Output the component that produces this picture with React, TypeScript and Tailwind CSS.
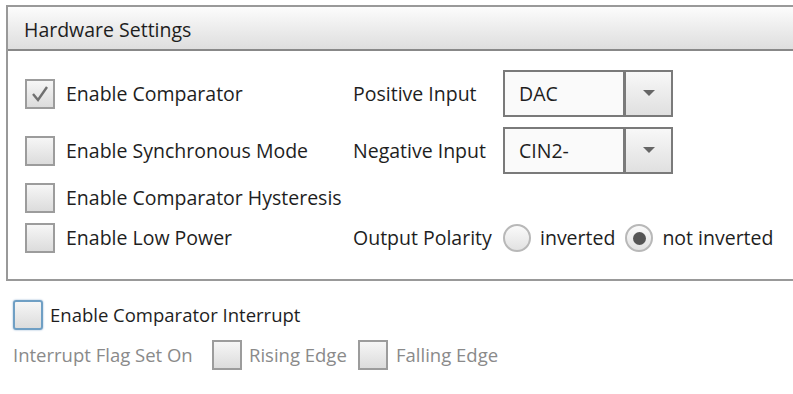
function CheckBox({ checked = false, focused = false }: { checked?: boolean; focused?: boolean }) {
  return (
    <div
      className={
        'flex h-[30px] w-[30px] shrink-0 items-center justify-center border-2 bg-gradient-to-b from-[#f6f6f6] to-[#dcdcdc] ' +
        (focused ? 'border-[#6f9fc4] rounded-[3px] shadow-[0_0_2px_#8ac]' : 'border-[#9c9c9c]')
      }
    >
      {checked && (
        <svg width="20" height="18" viewBox="0 0 20 18">
          <path d="M3 9 L8 15 L17 2" fill="none" stroke="#707070" strokeWidth="2.4" />
        </svg>
      )}
    </div>
  );
}

function Radio({ selected = false }: { selected?: boolean }) {
  return (
    <div className="flex h-[28px] w-[28px] shrink-0 items-center justify-center rounded-full border-2 border-[#b8b8b8] bg-gradient-to-b from-[#fafafa] to-[#e2e2e2]">
      {selected && <div className="h-[13px] w-[13px] rounded-full bg-[#555]" />}
    </div>
  );
}

function Dropdown({ value }: { value: string }) {
  return (
    <div className="flex h-[47px] w-[170px] border-2 border-[#7a7a7a] bg-[#fafafa]">
      <div className="flex flex-1 items-center pl-[14px]">{value}</div>
      <div className="flex w-[48px] items-center justify-center border-l-[3px] border-[#7a7a7a] bg-gradient-to-b from-[#f8f8f8] to-[#e0e0e0]">
        <svg width="12" height="7" viewBox="0 0 12 7">
          <path d="M0 0 L12 0 L6 6 Z" fill="#666" />
        </svg>
      </div>
    </div>
  );
}

export default function App() {
  return (
    <div
      className="h-[394px] w-[793px] overflow-hidden bg-white text-[#1e1e1e]"
      style={{ fontFamily: '"Open Sans", "Noto Sans", sans-serif' }}
    >
      {/* Hardware settings panel */}
      <div className="ml-[6px] mt-[5px] w-[800px] border-y-2 border-l-2 border-[#999] text-[19.5px]">
        <div className="flex h-[44px] items-center border-b-2 border-[#888] bg-gradient-to-b from-[#fcfcfc] to-[#dedede] pl-[16px] pt-[3px]">
          Hardware Settings
        </div>
        <div className="flex flex-col pb-[26px] pl-[17px] pt-[19px]">
          <div className="flex h-[47px] items-center">
            <div className="flex w-[328px] items-center gap-[11px]">
              <CheckBox checked />
              <span>Enable Comparator</span>
            </div>
            <span className="w-[150px]">Positive Input</span>
            <Dropdown value="DAC" />
          </div>
          <div className="mt-[10px] flex h-[47px] items-center">
            <div className="flex w-[328px] items-center gap-[11px]">
              <CheckBox />
              <span>Enable Synchronous Mode</span>
            </div>
            <span className="w-[150px]">Negative Input</span>
            <Dropdown value="CIN2-" />
          </div>
          <div className="mt-[9px] flex h-[30px] items-center">
            <div className="flex w-[328px] items-center gap-[11px]">
              <CheckBox />
              <span className="whitespace-nowrap">Enable Comparator Hysteresis</span>
            </div>
          </div>
          <div className="mt-[10px] flex h-[30px] items-center">
            <div className="flex w-[328px] items-center gap-[11px]">
              <CheckBox />
              <span>Enable Low Power</span>
            </div>
            <span className="w-[150px]">Output Polarity</span>
            <div className="flex items-center gap-[9px]">
              <Radio />
              <span>inverted</span>
              <div className="ml-[1px] flex items-center gap-[9px]">
                <Radio selected />
                <span className="whitespace-nowrap">not inverted</span>
              </div>
            </div>
          </div>
        </div>
      </div>

      {/* Interrupt settings */}
      <div className="ml-[13px] mt-[19px] flex items-center gap-[7px] text-[18.5px]">
        <CheckBox focused />
        <span>Enable Comparator Interrupt</span>
      </div>
      <div className="ml-[13px] mt-[10px] flex items-center text-[18.5px] text-[#8a8a8a]">
        <span className="w-[199px]">Interrupt Flag Set On</span>
        <CheckBox />
        <span className="ml-[7px] w-[109px]">Rising Edge</span>
        <CheckBox />
        <span className="ml-[8px]">Falling Edge</span>
      </div>
    </div>
  );
}
